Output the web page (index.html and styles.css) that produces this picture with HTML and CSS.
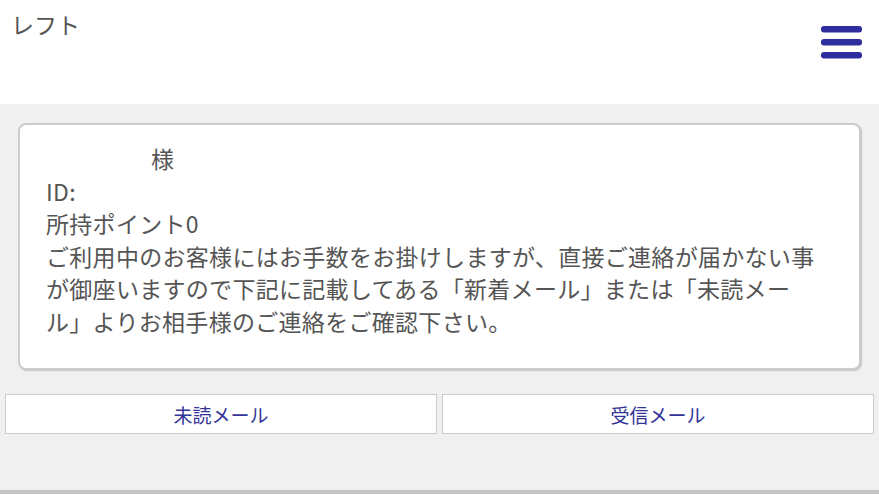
FILE: index.html
```html
<html>
<head>
    <link rel="stylesheet" href="styles.css">
</head>
<body>
    <div class="header">
        <div class="title">レフト</div>
        <div class="menu-btn">
            <svg width="41" height="33" viewBox="0 0 41 33">
                <rect x="0" y="0" width="41" height="6.5" rx="3" fill="#2e2e9e"/>
                <rect x="0" y="13" width="41" height="6.5" rx="3" fill="#2e2e9e"/>
                <rect x="0" y="26" width="41" height="6.5" rx="3" fill="#2e2e9e"/>
            </svg>
        </div>
    </div>
    <div class="main">
        <div class="info-box">
            <div><span class="name"></span>様</div>
            <div>ID:</div>
            <div>所持ポイント0</div>
            <div>ご利用中のお客様にはお手数をお掛けしますが、直接ご連絡が届かない事が御座いますので下記に記載してある「新着メール」または「未読メール」よりお相手様のご連絡をご確認下さい。</div>
        </div>
        <div class="buttons">
            <a class="mail-btn">未読メール</a>
            <a class="mail-btn">受信メール</a>
        </div>
    </div>
    <div class="footer"></div>
</body>
</html>
```

FILE: styles.css
```css
body {
    margin: 0;
    background-color: #f0f0f0;
    font-family: "Noto Sans CJK JP", "Noto Sans", sans-serif;
    color: #555555;
}
.header {
    height: 104px;
    background-color: #ffffff;
    display: flex;
    justify-content: space-between;
    align-items: flex-start;
}
.title {
    font-size: 23px;
    line-height: 26px;
    padding: 11px 0 0 11px;
}
.menu-btn {
    padding: 26px 17px 0 0;
}
.main {
    height: 386px;
    padding-top: 19px;
    box-sizing: border-box;
}
.info-box {
    margin: 0 18px;
    padding: 17px 26px 31px;
    background-color: #ffffff;
    border: 2px solid #cccccc;
    border-radius: 8px;
    box-shadow: 1px 1px 1px #c4c4c4;
    font-size: 23px;
    line-height: 32.5px;
    color: #555555;
    text-spacing-trim: space-all;
    letter-spacing: 0.3px;
}
.name {
    display: inline-block;
    width: 105px;
}
.buttons {
    display: flex;
    gap: 5px;
    padding: 0 5px;
    margin-top: 24px;
}
.mail-btn {
    flex: 1;
    height: 40px;
    box-sizing: border-box;
    border: 1px solid #cccccc;
    background-color: #ffffff;
    color: #333399;
    font-size: 19px;
    display: flex;
    align-items: center;
    justify-content: center;
}
.footer {
    height: 4px;
    background-color: #c4c4c4;
}
```
